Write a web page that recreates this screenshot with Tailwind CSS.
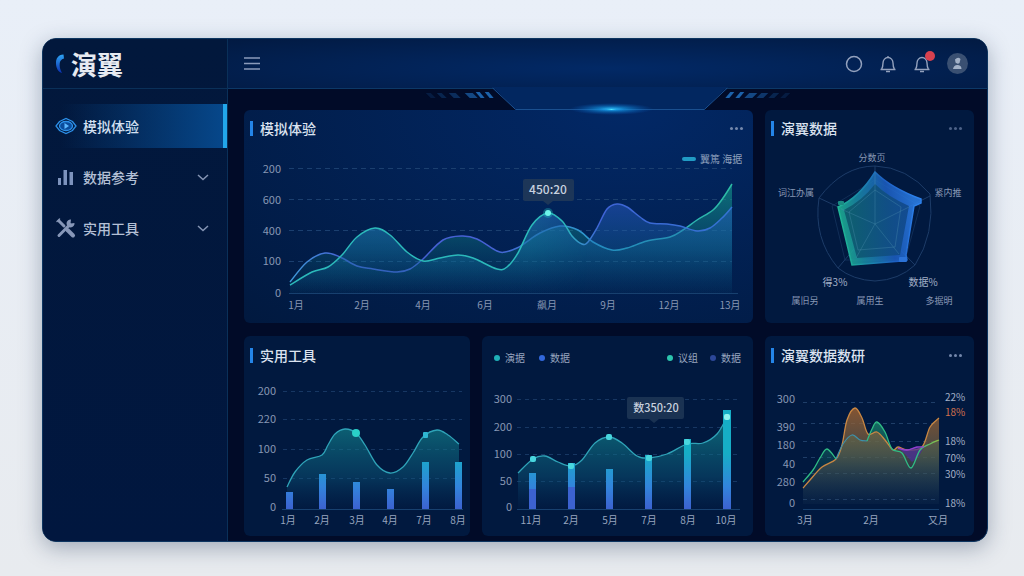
<!DOCTYPE html>
<html lang="zh-CN">
<head>
  <meta charset="UTF-8">
  <meta name="viewport" content="width=device-width, initial-scale=1.0">
  <title>演翼</title>
  <script src="https://cdn.jsdelivr.net/npm/@tailwindcss/browser@4"></script>
</head>
<body class="min-h-screen bg-linear-to-b from-[#e9eff8] to-[#e8ebef] pt-[38px] pr-9 pb-[35px] pl-[42px] font-['Noto_Sans_CJK_SC',sans-serif] text-[#b4c0d6]">

  <div class="flex overflow-hidden rounded-[14px] border border-[#0d3560] bg-[#010b28] shadow-[0_6px_22px_rgba(30,50,80,0.35)]">

    <!-- Sidebar -->
    <aside class="w-[185px] shrink-0 border-r border-[#0a3059] bg-linear-to-b from-[#02183c] to-[#01173f]">
      <div class="flex h-[50px] items-center gap-1.5 border-b border-[#0a3059] pl-3">
        <svg class="h-5 w-2.5" viewBox="0 0 10 20" fill="none">
          <defs>
            <linearGradient id="logo" x1="0" y1="0" x2="0" y2="1">
              <stop offset="0" stop-color="#2fa4f4"/>
              <stop offset="1" stop-color="#0a2fb0"/>
            </linearGradient>
          </defs>
          <path d="M8.500 0.500C3 0.500 0.500 5 1 10C1.300 14 3 18 7 19C4.800 15 4.400 12 4.700 9.500C5 7 6 5.500 9 4.500Z" fill="url(#logo)"/>
        </svg>
        <span class="text-[26px] leading-8 font-bold text-[#e6eaf1]">演翼</span>
      </div>

      <nav class="flex flex-col gap-[7px] pt-[15px] text-sm font-medium">
        <a href="#" class="flex h-11 items-center gap-1.5 border-r-4 border-[#22a6ea] bg-linear-to-r from-transparent from-10% to-[#06478a] pl-3 text-[#d3e0f2]">
          <svg class="size-[22px]" viewBox="0 0 22 22" fill="none" stroke="#2c8fe8" stroke-width="1.300">
            <path d="M4.500 6.500L11 3.500L17.500 6.500L21 11L17.500 15.500L11 18.500L4.500 15.500L1 11Z"/>
            <ellipse cx="11" cy="11" rx="6.500" ry="4.500" fill="#0b4c9c"/>
            <path d="M9.500 8L14 11L9.500 14Z" fill="#5cb8ff" stroke="none"/>
          </svg>
          模拟体验
        </a>
        <a href="#" class="flex h-11 items-center gap-1.5 pr-[17px] pl-3">
          <svg class="size-[22px]" viewBox="0 0 22 22" fill="#7d93bd">
            <rect x="3" y="12" width="3" height="7"/>
            <rect x="8.500" y="4" width="3.500" height="15"/>
            <rect x="14.500" y="6" width="3.500" height="13"/>
          </svg>
          数据参考
          <svg class="ml-auto size-3.5" viewBox="0 0 14 14" fill="none" stroke="#8494b3" stroke-width="1.500"><path d="M2 5L7 9.500L12 5"/></svg>
        </a>
        <a href="#" class="flex h-11 items-center gap-1.5 pr-[17px] pl-3">
          <svg class="size-[22px]" viewBox="0 0 22 22" fill="none" stroke="#8797b8" stroke-linecap="round">
            <path d="M4 4L9 9" stroke-width="3"/>
            <path d="M12.500 13L18 18.500" stroke-width="4"/>
            <path d="M4 18.500L15 7.500" stroke-width="3"/>
            <path d="M19.500 6A4 4 0 1 1 16 2.500L15.500 6.500Z" fill="#8797b8" stroke="none"/>
            <path d="M2 4.500L4.500 2" stroke-width="1.500"/>
          </svg>
          实用工具
          <svg class="ml-auto size-3.5" viewBox="0 0 14 14" fill="none" stroke="#8494b3" stroke-width="1.500"><path d="M2 5L7 9.500L12 5"/></svg>
        </a>
      </nav>
    </aside>

    <div class="min-w-0 flex-1">

      <!-- Top bar -->
      <header class="relative flex h-[50px] items-center border-b border-[#0c3867] bg-radial-[at_50%_60%] from-[#022966] to-[#021a42] pr-[19px] pl-4">
        <button type="button" aria-label="菜单" class="cursor-pointer">
          <svg class="size-4" viewBox="0 0 16 16" stroke="#8b9bbb" stroke-width="1.500"><path d="M0 2H16M0 7.500H16M0 13H16"/></svg>
        </button>
        <div class="ml-auto flex items-center gap-4">
          <button type="button" aria-label="状态" class="cursor-pointer">
            <svg class="size-[18px]" viewBox="0 0 18 18" fill="none" stroke="#93a1bd" stroke-width="1.500"><circle cx="9" cy="9" r="7.500"/></svg>
          </button>
          <button type="button" aria-label="通知" class="cursor-pointer">
            <svg class="size-[18px]" viewBox="0 0 18 18" fill="none" stroke="#93a1bd" stroke-width="1.400"><path d="M1.500 14.500H16.500M2.500 14.500Q4 12 4 8A5 5.500 0 0 1 14 8Q14 12 15.500 14.500M9 2.500V1"/><path d="M7 16.500H11"/></svg>
          </button>
          <button type="button" aria-label="新消息" class="relative cursor-pointer">
            <svg class="size-[18px]" viewBox="0 0 18 18" fill="none" stroke="#93a1bd" stroke-width="1.400"><path d="M1.500 14.500H16.500M2.500 14.500Q4 12 4 8A5 5.500 0 0 1 14 8Q14 12 15.500 14.500"/><path d="M7 16.500H11"/></svg>
            <span class="absolute -top-1 -right-1 size-2.5 rounded-full bg-[#d8414f]"></span>
          </button>
          <button type="button" aria-label="账户" class="cursor-pointer">
            <svg class="size-[21px]" viewBox="0 0 21 21"><circle cx="10.500" cy="10.500" r="10.500" fill="#3a5072"/><path d="M8 6.500Q11 3.500 13.500 6L12.500 10Q10.500 11.500 8.500 9.500ZM6 16Q7 11.500 11 12Q14.500 12.500 14.500 16Z" fill="#a4b2c8"/></svg>
          </button>
        </div>

        <svg class="absolute top-full left-0 z-10 -mt-px h-[30px] w-full" viewBox="0 0 760 30" fill="none" aria-hidden="true">
          <defs>
            <radialGradient id="flare">
              <stop offset="0" stop-color="#4fe4ff"/>
              <stop offset="0.300" stop-color="#159be6" stop-opacity="0.700"/>
              <stop offset="1" stop-color="#0a5bc0" stop-opacity="0"/>
            </radialGradient>
          </defs>
          <path d="M265 0L288 22.500H477L500 0Z" fill="#022760"/>
          <path d="M265 1L288 22.500H477L500 1" stroke="#1b5091"/>
          <g fill="#1c62ab">
            <path d="M198 6h5l5 5h-5z" opacity="0.200"/>
            <path d="M209 6h5l5 5h-5z" opacity="0.300"/>
            <path d="M221 6h7l5 5h-7z" opacity="0.400"/>
            <path d="M237 6h8l5 5h-8z" opacity="0.700"/>
            <path d="M248 5h4l5 6h-4z"/>
            <path d="M257 5h4l5 6h-4z"/>
            <path d="M503 5h4l-5 6h-4z"/>
            <path d="M513 5h4l-5 6h-4z"/>
            <path d="M522 6h8l-5 5h-8z" opacity="0.700"/>
            <path d="M534 6h7l-5 5h-7z" opacity="0.500"/>
            <path d="M546 6h6l-5 5h-6z" opacity="0.300"/>
            <path d="M558 6h5l-5 5h-5z" opacity="0.200"/>
          </g>
          <ellipse cx="384" cy="22" rx="42" ry="6" fill="url(#flare)"/>
          <ellipse cx="384" cy="22.500" rx="16" ry="2" fill="url(#flare)"/>
        </svg>
      </header>

      <main class="grid grid-cols-[226fr_271fr_209fr] gap-x-3 gap-y-[13px] pt-[21px] pr-[13px] pb-[5px] pl-4">

        <section class="col-span-2 min-w-0 rounded-md bg-[#021a45] bg-radial-[at_75%_0%] from-[#022866] to-[#01193f]">
          <div class="flex h-8 items-start px-1.5 pt-[9px]">
            <h2 class="flex items-center gap-[7px] text-sm leading-[18px] font-medium text-[#dbe3f0]"><i class="h-[15px] w-[3px] bg-[#2485e8]"></i>模拟体验</h2>
            <button type="button" aria-label="更多" class="mt-2 mr-1 ml-auto flex cursor-pointer gap-0.5"><i class="size-[3px] rounded-full bg-[#7488ac]"></i><i class="size-[3px] rounded-full bg-[#7488ac]"></i><i class="size-[3px] rounded-full bg-[#7488ac]"></i></button>
          </div>
          <svg class="w-full" viewBox="0 0 509 181" fill="none" role="img" aria-label="模拟体验">
            <defs>
              <linearGradient id="lineA" gradientUnits="userSpaceOnUse" x1="46" y1="0" x2="488" y2="0">
                <stop offset="0.620" stop-color="#2bb9ba"/>
                <stop offset="0.700" stop-color="#3f63d6"/>
                <stop offset="1" stop-color="#3373d2"/>
              </linearGradient>
              <linearGradient id="lineB" gradientUnits="userSpaceOnUse" x1="46" y1="0" x2="488" y2="0">
                <stop offset="0" stop-color="#3f9ad8"/>
                <stop offset="0.120" stop-color="#4660d4"/>
                <stop offset="0.450" stop-color="#4660d4"/>
                <stop offset="0.700" stop-color="#2b9fcb"/>
                <stop offset="1" stop-color="#2cbba4"/>
              </linearGradient>
              <linearGradient id="areaTeal" gradientUnits="userSpaceOnUse" x1="0" y1="40" x2="0" y2="152">
                <stop offset="0" stop-color="#16a08d" stop-opacity="0.900"/>
                <stop offset="0.500" stop-color="#118a8c" stop-opacity="0.500"/>
                <stop offset="1" stop-color="#0a5a86" stop-opacity="0.050"/>
              </linearGradient>
              <linearGradient id="areaMix" gradientUnits="userSpaceOnUse" x1="0" y1="62" x2="0" y2="152">
                <stop offset="0" stop-color="#2a5cc8" stop-opacity="0.650"/>
                <stop offset="0.500" stop-color="#1668a8" stop-opacity="0.450"/>
                <stop offset="1" stop-color="#0a5a86" stop-opacity="0.050"/>
              </linearGradient>
              <linearGradient id="fade" gradientUnits="userSpaceOnUse" x1="46" y1="0" x2="344" y2="0">
                <stop offset="0.800" stop-color="#fff"/>
                <stop offset="1" stop-color="#000"/>
              </linearGradient>
              <mask id="fadeRight" maskUnits="userSpaceOnUse" x="0" y="0" width="509" height="181">
                <rect width="344" height="181" fill="url(#fade)"/>
              </mask>
              <linearGradient id="bar" gradientUnits="userSpaceOnUse" x1="0" y1="85" x2="0" y2="141">
                <stop offset="0" stop-color="#16aec6"/>
                <stop offset="0.600" stop-color="#3284dc"/>
                <stop offset="1" stop-color="#3c62d0"/>
              </linearGradient>
            </defs>
            <path d="M45 26.500H488M45 57.500H488M45 88.500H488M45 119.500H488" stroke="#1b3f6f" stroke-dasharray="5 4"/>
            <path d="M45 151.500H494" stroke="#17406f"/>
            <g data-base="151" data-points="46,140 63,120 81,111 96,115 113,124 129,127 153,130 166,127 179,117 199,98 218,94 233,97 253,109 261,110 273,106 281,101 296,91 316,84 334,88 349,100 368,108 383,106 403,99 426,95 439,88 453,78 469,68 479,56 488,42">
              <path class="area" fill="url(#areaTeal)" opacity="0.700"/>
              <path class="line" stroke="url(#lineB)" stroke-width="1.500"/>
            </g>
            <g data-base="151" data-points="46,143 68,130 84,125 98,113 113,95 131,86 146,93 163,110 179,119 196,116 214,113 229,116 253,127 263,125 274,111 288,83 304,71 318,79 328,94 338,102 344,100">
              <path class="area" fill="url(#areaTeal)" opacity="0.700" mask="url(#fadeRight)"/>
            </g>
            <g data-base="151" data-points="46,143 68,130 84,125 98,113 113,95 131,86 146,93 163,110 179,119 196,116 214,113 229,116 253,127 263,125 274,111 288,83 304,71 318,79 328,94 338,102 344,100 353,86 363,67 373,62 383,65 396,75 406,81 423,82 436,84 453,89 466,86 478,76 488,65">
              <path class="area" fill="url(#areaMix)" opacity="0.800"/>
              <path class="line" stroke="url(#lineA)" stroke-width="1.500"/>
            </g>
            <circle cx="304" cy="71" r="5" fill="#27d6cd" opacity="0.300"/>
            <circle cx="304" cy="71" r="3" fill="#6df3ea"/>
            <path d="M281 37H328Q330 37 330 39V57Q330 59 328 59H309L304 63L299 59H281Q279 59 279 57V39Q279 37 281 37Z" fill="#1d3658"/>
            <text x="304" y="52" text-anchor="middle" class="fill-[#c8d1df] text-xs font-medium">450:20</text>
            <rect x="438" y="15" width="14" height="4" rx="2" fill="#219bc4"/>
            <text x="456" y="21" class="fill-[#8fa0bd] text-[10px]">翼篤 海据</text>
            <g class="fill-[#8797b4] text-[11px]" text-anchor="end">
              <text x="37" y="31">200</text><text x="37" y="62">600</text><text x="37" y="93">400</text><text x="37" y="123">100</text><text x="37" y="155">0</text>
            </g>
            <g class="fill-[#8797b4] text-[10px]" text-anchor="middle">
              <text x="52" y="167">1月</text><text x="118" y="167">2月</text><text x="179" y="167">4月</text><text x="241" y="167">6月</text><text x="303" y="167">飙月</text><text x="364" y="167">9月</text><text x="425" y="167">12月</text><text x="486" y="167">13月</text>
            </g>
          </svg>
        </section>

        <section class="min-w-0 rounded-md bg-[#01193f]">
          <div class="flex h-8 items-start px-1.5 pt-[9px]">
            <h2 class="flex items-center gap-[7px] text-sm leading-[18px] font-medium text-[#dbe3f0]"><i class="h-[15px] w-[3px] bg-[#2485e8]"></i>演翼数据</h2>
            <button type="button" aria-label="更多" class="mt-2 mr-1.5 ml-auto flex cursor-pointer gap-0.5"><i class="size-[3px] rounded-full bg-[#4d6287]"></i><i class="size-[3px] rounded-full bg-[#4d6287]"></i><i class="size-[3px] rounded-full bg-[#4d6287]"></i></button>
          </div>
          <svg class="w-full" viewBox="0 0 209 181" fill="none" role="img" aria-label="演翼数据">
            <defs>
              <linearGradient id="radar" gradientUnits="userSpaceOnUse" x1="75" y1="85" x2="152" y2="75">
                <stop offset="0" stop-color="#1fb894"/>
                <stop offset="0.250" stop-color="#1a8fa6"/>
                <stop offset="0.650" stop-color="#1d5fc4"/>
                <stop offset="1" stop-color="#2c80ea"/>
              </linearGradient>
              <linearGradient id="radarIn" gradientUnits="userSpaceOnUse" x1="80" y1="0" x2="140" y2="0">
                <stop offset="0" stop-color="#0d5a6b"/>
                <stop offset="1" stop-color="#11498a"/>
              </linearGradient>
            </defs>
            <g stroke="#1d3c68">
              <path d="M110 24Q142 25 165 52Q170 92 150 123Q134 138 110 139Q88 138 73 126Q48 96 54 56Q78 24 110 24Z"/>
              <path d="M110 82V24M110 82L165 54M110 82L150 123M110 82L73 126M110 82L54 56"/>
              <path d="M110 38L155 64L140 118H80L67 64Z" stroke-opacity="0.600"/>
            </g>
            <path d="M110 30Q126 46 156 57V61L149 64L141 113L142 118L137 119L87 123L73 65Q94 56 110 30Z" fill="url(#radar)" fill-opacity="0.850" stroke="url(#radar)" stroke-width="1.500"/>
            <path d="M110 42Q122 54 144 64L135 113L92 116L79 68Q98 58 110 42Z" fill="url(#radarIn)" fill-opacity="0.900"/>
            <g stroke="#4d8fae" stroke-opacity="0.350">
              <path d="M110 82V30M110 82L144 65M110 82L134 112M110 82L91 116M110 82L76 67"/>
              <path d="M110 48L136 65L130 105L93 108L84 70Z"/>
            </g>
            <rect x="73" y="59" width="6" height="4" rx="1" fill="#1b8b83"/>
            <rect x="134" y="115" width="8" height="5" rx="1" fill="#2c73d8"/>
            <g class="fill-[#8797b4] text-[9px]" text-anchor="middle">
              <text x="107" y="19">分数页</text><text x="31" y="54">词江办属</text><text x="183" y="54">紧内推</text>
              <text x="40" y="162">属旧另</text><text x="105" y="162">属用生</text><text x="174" y="162">多据明</text>
            </g>
            <g class="fill-[#a3b0c7] text-[10px]" text-anchor="middle">
              <text x="70" y="144">得3%</text><text x="158" y="144">数据%</text>
            </g>
          </svg>
        </section>

        <section class="min-w-0 rounded-md bg-[#01193f]">
          <div class="flex h-8 items-start px-1.5 pt-2.5">
            <h2 class="flex items-center gap-[7px] text-sm leading-[18px] font-medium text-[#dbe3f0]"><i class="h-[15px] w-[3px] bg-[#2485e8]"></i>实用工具</h2>
          </div>
          <svg class="w-full" viewBox="0 0 226 168" fill="none" role="img" aria-label="实用工具">
            <defs>
              <linearGradient id="areaSmall" gradientUnits="userSpaceOnUse" x1="0" y1="60" x2="0" y2="141">
                <stop offset="0" stop-color="#12868f" stop-opacity="0.650"/>
                <stop offset="0.600" stop-color="#0c5a7d" stop-opacity="0.450"/>
                <stop offset="1" stop-color="#083a6a" stop-opacity="0.050"/>
              </linearGradient>
            </defs>
            <path d="M39 23.500H218M39 51.500H218M39 81.500H218M39 110.500H218" stroke="#173763" stroke-dasharray="4 4"/>
            <path d="M38 141.500H219" stroke="#17406f"/>
            <g data-base="141" data-points="43,119 51,104 63,92 78,87 84,77 91,66 101,61 112,65 121,77 133,97 146,105 159,99 169,85 179,69 193,62 204,67 215,76">
              <path class="area" fill="url(#areaSmall)"/>
              <path class="line" stroke="#2fa3b8" stroke-width="1.300"/>
            </g>
            <g fill="url(#bar)">
              <rect x="42" y="124" width="7" height="17"/><rect x="75" y="106" width="7" height="35"/><rect x="109" y="114" width="7" height="27"/><rect x="143" y="121" width="7" height="20"/><rect x="178" y="94" width="7" height="47"/><rect x="211" y="94" width="7" height="47"/>
            </g>
            <circle cx="112" cy="65" r="4" fill="#2ad0c8"/>
            <rect x="179" y="64" width="5" height="6" rx="1" fill="#2fb6d2"/>
            <g class="fill-[#8797b4] text-[11px]" text-anchor="end">
              <text x="32" y="27">200</text><text x="32" y="55">220</text><text x="32" y="85">100</text><text x="32" y="114">50</text><text x="32" y="143">0</text>
            </g>
            <g class="fill-[#98a6bf] text-[10px]" text-anchor="middle">
              <text x="44" y="156">1月</text><text x="78" y="156">2月</text><text x="113" y="156">3月</text><text x="146" y="156">4月</text><text x="180" y="156">7月</text><text x="214" y="156">8月</text>
            </g>
          </svg>
        </section>

        <section class="min-w-0 rounded-md bg-[#01193f]">
          <div class="flex h-8 items-center px-3 pt-3 text-[10px] leading-5 text-[#98a6bf]">
            <span class="flex items-center gap-[5px]"><i class="size-1.5 rounded-full bg-[#1fb0b8]"></i>演据</span>
            <span class="ml-3.5 flex items-center gap-[5px]"><i class="size-1.5 rounded-full bg-[#3268dc]"></i>数据</span>
            <span class="ml-auto flex items-center gap-[5px]"><i class="size-1.5 rounded-full bg-[#2cc5ae]"></i>议组</span>
            <span class="ml-3 flex items-center gap-[5px]"><i class="size-1.5 rounded-full bg-[#2c4798]"></i>数据</span>
          </div>
          <svg class="w-full" viewBox="0 0 271 168" fill="none" role="img" aria-label="数据">
            <path d="M35 31.500H257M35 59.500H257M35 86.500H257M35 113.500H257" stroke="#173763" stroke-dasharray="4 4"/>
            <path d="M35 141.500H258" stroke="#17406f"/>
            <g data-base="141" data-points="36,105 51,91 63,88 76,94 89,98 100,92 113,75 127,69 140,75 155,88 167,90 185,86 205,76 221,75 235,66 245,49">
              <path class="area" fill="url(#areaSmall)"/>
              <path class="line" stroke="#2fa3b8" stroke-width="1.300"/>
            </g>
            <g fill="url(#bar)">
              <rect x="47" y="105" width="7" height="36"/><rect x="86" y="95" width="7" height="46"/><rect x="124" y="101" width="7" height="40"/><rect x="163" y="87" width="7" height="54"/><rect x="202" y="71" width="7" height="70"/><rect x="241" y="42" width="8" height="99"/>
            </g>
            <g fill="#3c62d0"><rect x="47" y="121" width="7" height="20"/><rect x="86" y="119" width="7" height="22"/></g>
            <g fill="#49d6de">
              <rect x="48" y="88" width="6" height="6" rx="2"/><rect x="86" y="95" width="6" height="6" rx="2"/><rect x="124" y="66" width="6" height="6" rx="2"/><rect x="164" y="87" width="6" height="6" rx="2"/><rect x="202" y="71" width="6" height="6" rx="2"/><rect x="242" y="46" width="6" height="6" rx="2" fill="#8ff2ee"/>
            </g>
            <path d="M147 29H200Q202 29 202 31V49Q202 51 200 51H177L172 55L167 51H147Q145 51 145 49V31Q145 29 147 29Z" fill="#1a3252"/>
            <text x="174" y="44" text-anchor="middle" class="fill-[#c8d1df] text-[11px] font-medium">数350:20</text>
            <g class="fill-[#8797b4] text-[11px]" text-anchor="end">
              <text x="30" y="35">300</text><text x="30" y="63">200</text><text x="30" y="90">100</text><text x="30" y="117">50</text><text x="30" y="143">0</text>
            </g>
            <g class="fill-[#98a6bf] text-[10px]" text-anchor="middle">
              <text x="49" y="156">11月</text><text x="89" y="156">2月</text><text x="128" y="156">5月</text><text x="167" y="156">7月</text><text x="206" y="156">8月</text><text x="244" y="156">10月</text>
            </g>
          </svg>
        </section>

        <section class="min-w-0 rounded-md bg-[#01193f]">
          <div class="flex h-8 items-start px-1.5 pt-2.5">
            <h2 class="flex items-center gap-[7px] text-sm leading-[18px] font-medium text-[#dbe3f0]"><i class="h-[15px] w-[3px] bg-[#2485e8]"></i>演翼数据数研</h2>
            <button type="button" aria-label="更多" class="mt-2 mr-1.5 ml-auto flex cursor-pointer gap-0.5"><i class="size-[3px] rounded-full bg-[#7488ac]"></i><i class="size-[3px] rounded-full bg-[#7488ac]"></i><i class="size-[3px] rounded-full bg-[#7488ac]"></i></button>
          </div>
          <svg class="w-full" viewBox="0 0 209 168" fill="none" role="img" aria-label="演翼数据数研">
            <defs>
              <linearGradient id="areaOrange" gradientUnits="userSpaceOnUse" x1="0" y1="40" x2="0" y2="135">
                <stop offset="0" stop-color="#b0692f" stop-opacity="0.750"/>
                <stop offset="0.500" stop-color="#5e5a48" stop-opacity="0.700"/>
                <stop offset="1" stop-color="#23405c" stop-opacity="0.150"/>
              </linearGradient>
              <linearGradient id="areaGreen" gradientUnits="userSpaceOnUse" x1="0" y1="54" x2="0" y2="135">
                <stop offset="0" stop-color="#22a878" stop-opacity="0.600"/>
                <stop offset="1" stop-color="#12405c" stop-opacity="0"/>
              </linearGradient>
              <linearGradient id="lineLime" x1="0" y1="0" x2="1" y2="0">
                <stop offset="0.700" stop-color="#2fbd85"/>
                <stop offset="1" stop-color="#8fbf45"/>
              </linearGradient>
            </defs>
            <path d="M38 34.500H174M38 55.500H174M38 73.500H174M38 89.500H174M38 105.500H174M38 131.500H174" stroke="#1f3e68" stroke-dasharray="4 4"/>
            <path d="M38 141.500H174" stroke="#17406f"/>
            <g data-base="136" data-points="38,114 48,102 55,90 62,81 71,91 78,76 87,67 95,72 102,73 107,61 112,54 120,64 127,81 137,85 146,100 155,82 165,76 174,72">
              <path class="area" fill="url(#areaGreen)"/>
            </g>
            <g data-base="136" data-points="38,120 45,112 57,99 71,91 77,77 82,52 90,40 97,50 103,66 112,64 120,72 128,82 133,79 142,82 157,79 165,59 174,50">
              <path class="area" fill="url(#areaOrange)"/>
              <path class="line" stroke="#c98743" stroke-width="1.300"/>
            </g>
            <path d="M133 80L142 82L150 79L159 79L154 88L147 94L140 86Z" fill="#4a2c9c" fill-opacity="0.700"/>
            <g data-base="136" data-points="71,91 78,76 87,67 95,72 102,73">
              <path class="line" stroke="#3f8fa8" stroke-width="1.200"/>
            </g>
            <g data-base="136" data-points="38,114 48,102 55,90 62,81 71,91">
              <path class="line" stroke="#2fbd85" stroke-width="1.300"/>
            </g>
            <g data-base="136" data-points="102,73 107,61 112,54 120,64 127,81 137,85 146,100 155,82 165,76 174,72">
              <path class="line" stroke="url(#lineLime)" stroke-width="1.300"/>
            </g>
            <g data-base="136" data-points="133,80 142,82 152,79 159,79">
              <path class="line" stroke="#9440cf" stroke-width="1.300"/>
            </g>
            <g class="fill-[#8797b4] text-[11px]" text-anchor="end">
              <text x="30" y="35">300</text><text x="30" y="63">390</text><text x="30" y="81">180</text><text x="30" y="100">40</text><text x="30" y="118">280</text><text x="30" y="139">0</text>
            </g>
            <g class="fill-[#a3b0c7] text-[10px]">
              <text x="180" y="33">22%</text><text x="180" y="48" class="fill-[#d2704c]">18%</text><text x="180" y="77">18%</text><text x="180" y="94">70%</text><text x="180" y="110">30%</text><text x="180" y="139">18%</text>
            </g>
            <g class="fill-[#98a6bf] text-[10px]" text-anchor="middle">
              <text x="40" y="156">3月</text><text x="106" y="156">2月</text><text x="173" y="156">又月</text>
            </g>
          </svg>
        </section>

      </main>
    </div>
  </div>

  <script>
    // Smooth curve through the points, each segment as a cubic bezier
    function curve(pts) {
      let d = "M" + pts[0].join(" ");
      for (let i = 0; i < pts.length - 1; i++) {
        const p0 = pts[i - 1] || pts[i];
        const p1 = pts[i];
        const p2 = pts[i + 1];
        const p3 = pts[i + 2] || p2;
        d += `C${p1[0] + (p2[0] - p0[0]) / 6} ${p1[1] + (p2[1] - p0[1]) / 6} ${p2[0] - (p3[0] - p1[0]) / 6} ${p2[1] - (p3[1] - p1[1]) / 6} ${p2[0]} ${p2[1]}`;
      }
      return d;
    }

    document.querySelectorAll("[data-points]").forEach((series) => {
      const pts = series.dataset.points.split(" ").map((p) => p.split(",").map(Number));
      const d = curve(pts);
      const line = series.querySelector(".line");
      const area = series.querySelector(".area");
      if (line) line.setAttribute("d", d);
      if (area) area.setAttribute("d", `${d}V${series.dataset.base}H${pts[0][0]}Z`);
    });
  </script>

</body>
</html>
